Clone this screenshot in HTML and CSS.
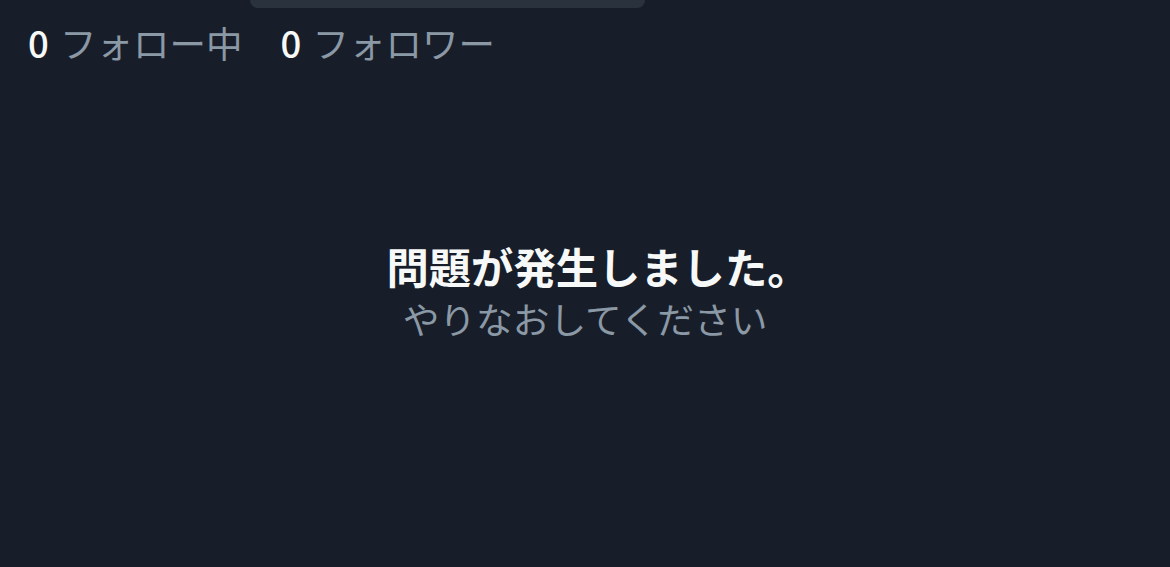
FILE: index.html
```html
<!DOCTYPE html>
<html lang="ja">
<head>
<meta charset="utf-8">
<link rel="stylesheet" href="styles.css">
</head>
<body>
<div class="page">
  <div class="topbar"><div class="pill"></div></div>
  <div class="stats">
    <span class="stat"><span class="num">0</span> <span class="label">フォロー中</span></span>
    <span class="stat"><span class="num">0</span> <span class="label">フォロワー</span></span>
  </div>
  <div class="error">
    <div class="title">問題が発生しました。</div>
    <div class="sub">やりなおしてください</div>
  </div>
</div>
</body>
</html>
```
FILE: styles.css
```css
html, body {
  margin: 0;
  padding: 0;
  background: #181e29;
  width: 1170px;
  height: 567px;
  overflow: hidden;
}
.page {
  font-family: "Noto Sans CJK JP", "Noto Sans", sans-serif;
  color: #f7f9f9;
}
.topbar {
  height: 8px;
  padding-left: 250px;
}
.pill {
  width: 395px;
  height: 8px;
  background: #2a323d;
  border-radius: 0 0 12px 12px;
}
.stats {
  display: flex;
  gap: 38px;
  padding-left: 28px;
  margin-top: 11px;
  font-size: 36.5px;
  line-height: 48px;
}
.num {
  color: #f7f9f9;
  font-weight: 500;
  margin-right: 3px;
}
.label {
  color: #8b98a5;
}
.error {
  margin-top: 174px;
  display: flex;
  flex-direction: column;
  align-items: center;
  text-align: center;
}
.title {
  font-size: 42.3px;
  font-weight: 700;
  line-height: 50px;
  padding-left: 26px;
  color: #f7f9f9;
}
.sub {
  margin-top: 2px;
  font-size: 36.7px;
  line-height: 50px;
  color: #8b98a5;
}
```
